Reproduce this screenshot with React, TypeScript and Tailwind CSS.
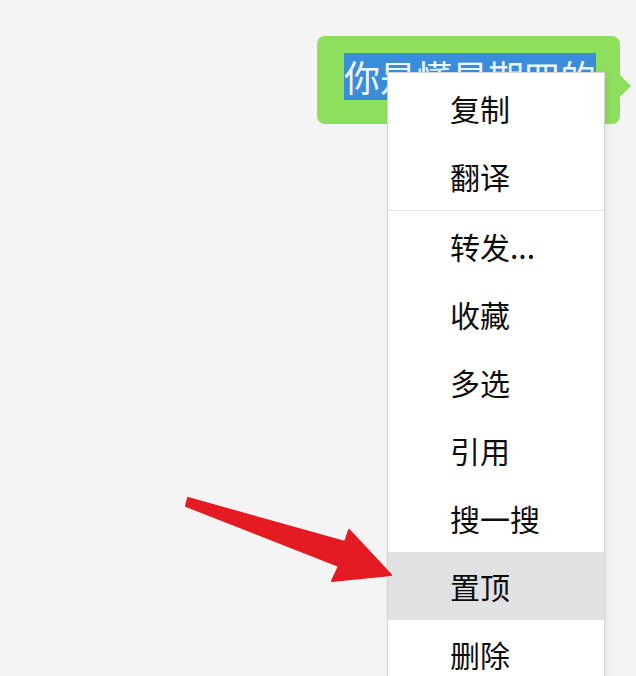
const menuItems = [
  { label: "复制" },
  { label: "翻译", divider: true },
  { label: "转发..." },
  { label: "收藏" },
  { label: "多选" },
  { label: "引用" },
  { label: "搜一搜" },
  { label: "置顶", active: true },
  { label: "删除" },
];

function ContextMenu() {
  return (
    <div className="absolute left-[387px] top-[72px] w-[218px] border border-[#d4d4d4] bg-white pt-[1px] shadow-[2px_2px_6px_rgba(0,0,0,0.08)]">
      {menuItems.map((item) => (
        <div key={item.label}>
          <div
            className={
              item.active
                ? "flex h-[68px] items-center bg-[#e2e2e2] pl-[62px] text-[30px] text-[#0d0d0d]"
                : "flex h-[68px] items-center pl-[62px] text-[30px] text-[#0d0d0d]"
            }
          >
            {item.label}
          </div>
          {item.divider ? <div className="mb-[1px] h-px bg-[#e3e3e3]" /> : null}
        </div>
      ))}
    </div>
  );
}

function PointerArrow() {
  return (
    <svg className="absolute left-0 top-0" width="636" height="676" viewBox="0 0 636 676">
      <polygon
        points="188,498 345,542 349,530 391,575 332,581 339,566 186,506"
        fill="#e41b22"
        stroke="#e41b22"
        strokeWidth="2"
        strokeLinejoin="round"
      />
    </svg>
  );
}

export default function App() {
  return (
    <div
      className="relative h-[676px] w-[636px] overflow-hidden bg-[#f4f4f4]"
      style={{ fontFamily: '"Noto Sans CJK SC", "Noto Sans", sans-serif' }}
    >
      <div className="flex justify-end pr-[16px] pt-[36px]">
        <div className="relative rounded-[8px] bg-[#8fdf5f] pb-[24px] pl-[27px] pr-[24px] pt-[17px]">
          <span className="block bg-[#3a8ddb] text-[36px] leading-[47px] text-[#eef6ff]">你是懂星期四的</span>
          <div className="absolute right-[-11px] top-[38px] h-0 w-0 border-y-[12px] border-l-[12px] border-y-transparent border-l-[#8fdf5f]" />
        </div>
      </div>
      <ContextMenu />
      <PointerArrow />
    </div>
  );
}
